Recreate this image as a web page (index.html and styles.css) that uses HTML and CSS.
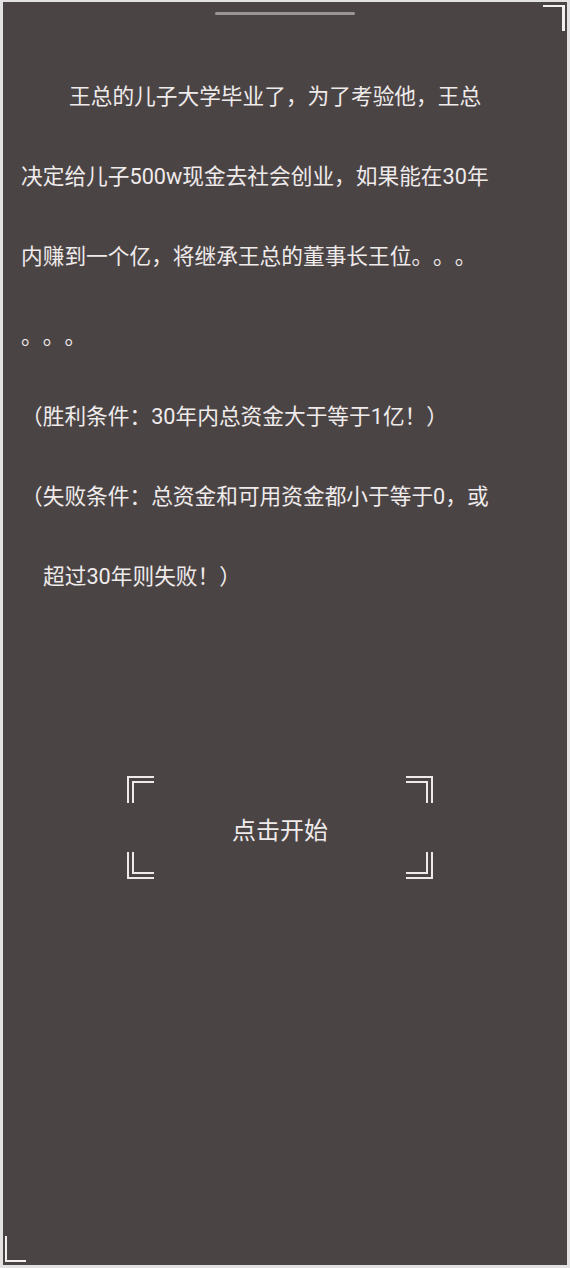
FILE: index.html
```html
<!DOCTYPE html>
<html lang="zh-CN">
<head>
<meta charset="utf-8">
<title>王总的儿子</title>
<link rel="stylesheet" href="styles.css">
</head>
<body>
<main class="screen">
  <span class="frame-mark frame-mark--tr"></span>
  <span class="frame-mark frame-mark--bl"></span>
  <div class="handle"></div>
  <section class="story">
    <p class="line line--indent2">王总的儿子大学毕业了，为了考验他，王总</p>
    <p class="line">决定给儿子500w现金去社会创业，如果能在30年</p>
    <p class="line">内赚到一个亿，将继承王总的董事长王位。。。</p>
    <p class="line">。。。</p>
    <p class="line">（胜利条件：30年内总资金大于等于1亿！）</p>
    <p class="line">（失败条件：总资金和可用资金都小于等于0，或</p>
    <p class="line line--indent1">超过30年则失败！）</p>
  </section>
  <button class="start" type="button">
    <span class="corner corner--tl"></span>
    <span class="corner corner--tr"></span>
    <span class="corner corner--bl"></span>
    <span class="corner corner--br"></span>
    <span class="start__label">点击开始</span>
  </button>
</main>
</body>
</html>
```

FILE: styles.css
```css
html, body {
  margin: 0;
  padding: 0;
}

body {
  background: #e4e2e2;
  width: 570px;
  height: 1268px;
  overflow: hidden;
  font-family: Roboto, "Noto Sans CJK SC", sans-serif;
}

.screen {
  position: relative;
  box-sizing: border-box;
  margin: 2px 3px 0 3px;
  height: 1263px;
  background: #4b4445;
  display: flex;
  flex-direction: column;
  overflow: hidden;
}

.handle {
  align-self: center;
  width: 140px;
  height: 3px;
  margin-top: 10px;
  border-radius: 2px;
  background: #9a9596;
}

.story {
  margin-top: 42px;
  padding-left: 18px;
}

.line {
  margin: 0;
  height: 80px;
  line-height: 80px;
  font-size: 21.7px;
  color: #efebeb;
  white-space: nowrap;
  text-spacing-trim: space-all;
}

.line--indent2 {
  padding-left: 48px;
}

.line--indent1 {
  padding-left: 22px;
}

.start {
  position: relative;
  margin: 159px 0 0 124px;
  width: 306px;
  height: 103px;
  padding: 0;
  border: 0;
  background: transparent;
  display: flex;
  align-items: center;
  justify-content: center;
  font-family: inherit;
  cursor: pointer;
}

.start__label {
  font-size: 24px;
  color: #efebeb;
  margin-top: 1px;
}

.corner {
  position: absolute;
  width: 27px;
  height: 27px;
  box-sizing: border-box;
  border: 0 double #eeeaea;
}

.corner--tl {
  top: 0;
  left: 0;
  border-top-width: 7px;
  border-left-width: 7px;
}

.corner--tr {
  top: 0;
  right: 0;
  border-top-width: 7px;
  border-right-width: 7px;
}

.corner--bl {
  bottom: 0;
  left: 0;
  border-bottom-width: 7px;
  border-left-width: 7px;
}

.corner--br {
  bottom: 0;
  right: 0;
  border-bottom-width: 7px;
  border-right-width: 7px;
}

.frame-mark {
  position: absolute;
  box-sizing: border-box;
  border: 0 solid #f2efef;
}

.frame-mark--tr {
  top: 3px;
  right: 2px;
  width: 22px;
  height: 26px;
  border-top-width: 2px;
  border-right-width: 3px;
}

.frame-mark--bl {
  bottom: 3px;
  left: 2px;
  width: 21px;
  height: 26px;
  border-bottom-width: 2px;
  border-left-width: 2px;
}
```
